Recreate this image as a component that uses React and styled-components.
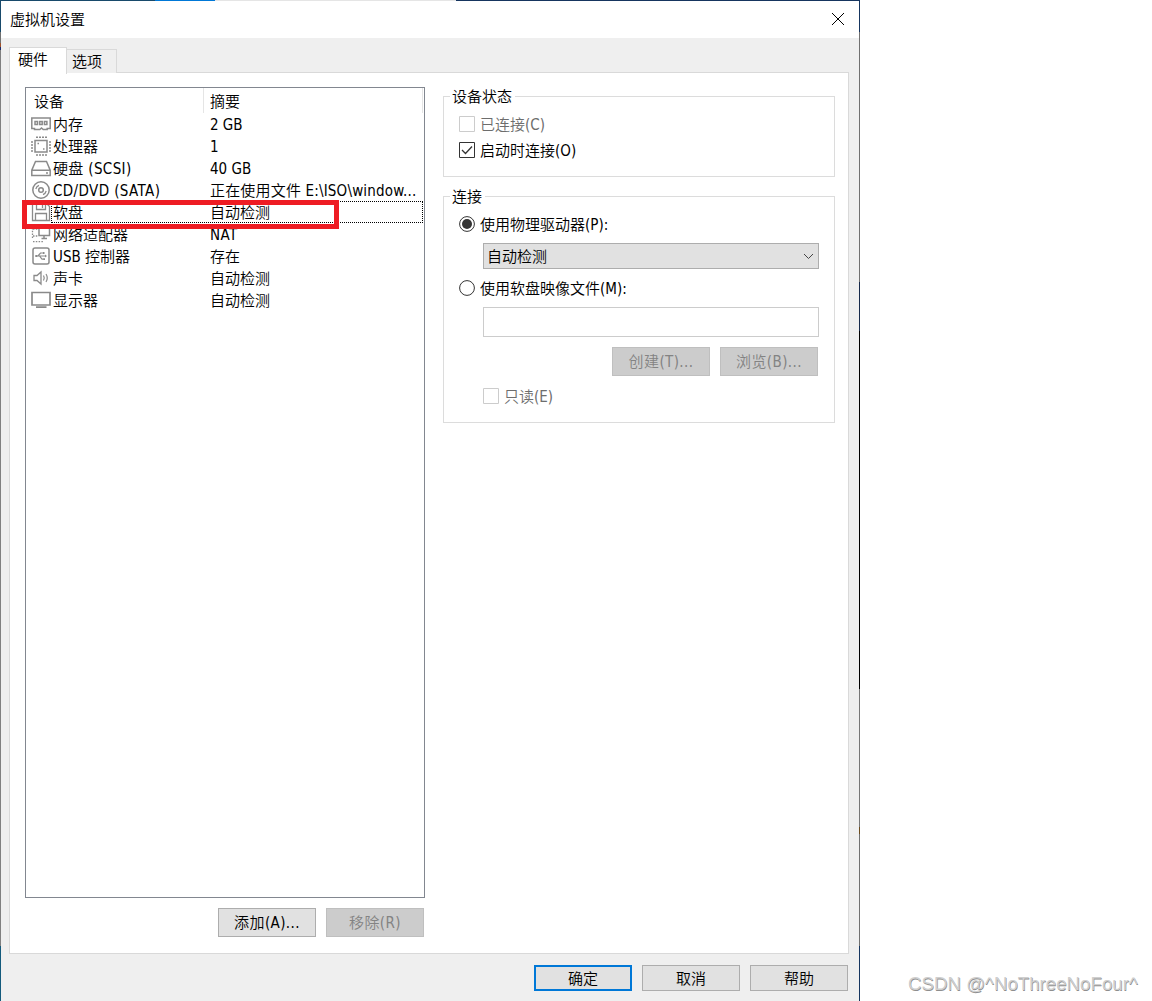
import React from 'react'
import styled, { createGlobalStyle } from 'styled-components';

const GlobalStyle = createGlobalStyle`
  * {
    box-sizing: border-box;
  }
  body {
    margin: 0;
    background: #fff;
    color: #000;
    font-family: "DejaVu Sans Condensed", "DejaVu Sans", "Noto Sans CJK SC DemiLight", "Noto Sans CJK SC Light", "Noto Sans CJK SC", sans-serif;
    font-stretch: condensed;
    font-size: 15px;
    line-height: 22px;
  }
`
const Desktop = styled.div`
  display: flex;
  justify-content: space-between;
  width: 1152px;
  height: 1001px;
  overflow: hidden;
`
const Dialog = styled.div`
  display: grid;
  grid-template-columns: 1px 858px 1px;
  grid-template-rows: 1px 1fr;
  width: 860px;
`
const TopEdge = styled.div`
  grid-column: 1 / 4;
  background: linear-gradient(90deg, #184a6b 0 155px, #0078d7 155px 215px, #e5e5e5 215px 456px, #16355f 456px);
`
const LeftEdge = styled.div`
  background: linear-gradient(180deg, #184a6b 0 31px, #707070 31px 42px, #a0522d 42px 46px, #1b2b6b 46px 49px, #808080 49px 945px, #135a7c 945px);
`
const RightEdge = styled.div`
  background: linear-gradient(180deg, #16355f 0 31px, #707070 31px 281px, #16294a 281px 330px, #000 330px 688px, #777 688px 826px, #6b4a1c 826px 833px, #707070 833px 945px, #16355f 945px);
`
const Frame = styled.div`
  display: flex;
  flex-direction: column;
  background: #efefef;
`
const TitleBar = styled.div`
  display: flex;
  justify-content: space-between;
  align-items: center;
  height: 37px;
  padding: 0 14px 1px 9px;
  background: #fff;
`
const Tabs = styled.div`
  display: flex;
  align-items: flex-end;
  height: 35px;
  padding: 9px 0 0 8px;
`
const Tab = styled.div`
  height: ${({ $active }) => ($active ? 27 : 24)}px;
  width: ${({ $active }) => ($active ? 58 : 50)}px;
  padding-left: ${({ $active }) => ($active ? 8 : 5)}px;
  line-height: ${({ $active }) => ($active ? 25 : 24)}px;
  border: 1px solid #d9d9d9;
  border-bottom: none;
  border-left-width: ${({ $active }) => ($active ? 1 : 0)}px;
  background: ${({ $active }) => ($active ? '#fff' : '#efefef')};
  margin-bottom: ${({ $active }) => ($active ? -1 : 0)}px;
  z-index: ${({ $active }) => ($active ? 1 : 0)};
`
const Page = styled.div`
  display: flex;
  gap: 18px;
  width: 840px;
  height: 882px;
  margin-left: 8px;
  margin-top: -1px;
  padding: 14px 0 0 15px;
  border: 1px solid #d9d9d9;
  background: #fff;
`
const Left = styled.div`
  width: 400px;
`
// glyphs sit a bit high in the line box, the padding brings them level with the icons
const Label = styled.span`
  padding-top: 2px;
  letter-spacing: ${({ $track }) => $track || 0}px;
`
const DeviceList = styled.div`
  height: 811px;
  border: 1px solid #828790;
  padding-right: 1px;
`
const Row = styled.div`
  position: relative;
  display: flex;
  align-items: center;
  height: ${({ $header }) => ($header ? 25 : 22)}px;
  white-space: nowrap;
`
const Name = styled.div`
  display: flex;
  align-items: center;
  width: 178px;
  height: 100%;
  padding-left: ${({ $header }) => ($header ? 8 : 5)}px;
  border-right: 1px solid ${({ $header }) => ($header ? '#e5e5e5' : 'transparent')};

  svg {
    flex: none;
    margin-right: 2px;
  }
`
const Summary = styled.div`
  display: flex;
  align-items: center;
  flex: 1;
  height: 100%;
  padding-left: 6px;
  border-right: 1px solid ${({ $header }) => ($header ? '#e5e5e5' : 'transparent')};
`
const FocusRect = styled.div`
  position: absolute;
  top: 0;
  left: 25px;
  right: 0;
  height: 22px;
  border: 1px dotted #000;
`
const RedMark = styled.div`
  position: absolute;
  z-index: 1;
  top: -1px;
  left: -4px;
  width: 317px;
  height: 29px;
  border: 5px solid #ee1c23;
`
const Buttons = styled.div`
  display: flex;
  justify-content: flex-end;
  gap: 10px;
  padding-top: ${({ $top }) => $top || 0}px;
  padding-right: ${({ $right }) => $right || 0}px;
`
const Button = styled.button`
  width: 98px;
  height: ${({ $short }) => ($short ? 26 : 29)}px;
  padding: ${({ $short }) => ($short ? 2 : 0)}px 0 0;
  font: inherit;
  line-height: 20px;
  letter-spacing: ${({ $short }) => ($short ? 0 : 0.4)}px;
  color: #000;
  background: #e1e1e1;
  border: ${({ $primary }) => ($primary ? '2px solid #0078d7' : '1px solid #adadad')};

  &:disabled {
    color: #838383;
    background: #ccc;
    border-color: #bfbfbf;
  }
`
const Right = styled.div`
  display: flex;
  flex-direction: column;
  width: 392px;
`
const Group = styled.fieldset`
  width: 392px;
  height: ${({ $height }) => $height}px;
  margin: 0 0 10px;
  padding: 6px 15px 0;
  border: 1px solid #dcdcdc;
  min-width: 0;
`
const Legend = styled.legend`
  height: 18px;
  line-height: 21px;
  margin-left: -9px;
  padding: 0 3px 0 2px;
`
const Option = styled.div`
  display: flex;
  align-items: center;
  gap: 5px;
  height: ${({ $height }) => $height || 26}px;
  padding-left: ${({ $indent }) => $indent || 0}px;
  color: ${({ $disabled }) => ($disabled ? '#6d6d6d' : '#000')};

  svg {
    flex: none;
  }
`
const Combo = styled.div`
  display: flex;
  align-items: center;
  justify-content: space-between;
  height: 26px;
  margin: 6px 0 6px 24px;
  padding: 0 4px 0 3px;
  background: #e1e1e1;
  border: 1px solid #adadad;
`
const PathInput = styled.div`
  height: 30px;
  margin: 6px 0 0 24px;
  border: 1px solid #ccc;
`
const Watermark = styled.div`
  align-self: flex-end;
  width: 244px;
  height: 30px;
  font: 18.7px/26px "Liberation Sans", sans-serif;
  white-space: nowrap;
  color: #cfcfcf;
  text-shadow: .5px .5px 0 #8e8e8e;
`

const Icon = ({ children }) => (
  <svg width="20" height="20" viewBox="0 0 20 20" fill="none" stroke="#8a8a8a" strokeWidth="1.5">
    {children}
  </svg>
)

const icons = {
  memory: (
    <Icon>
      <path d="M.8 4h18.400v10.500h-3v1h-4l-1.700-1.500-1.700 1.500H3.500v-1H.8z" />
      <path d="M4 7.500h2.500v3H4zM8.700 7.500h2.500v3h-2.500zM13.400 7.500h2.500v3h-2.500z" strokeWidth="1.500" />
    </Icon>
  ),
  cpu: (
    <Icon>
      <path d="M4 4.500h12v11.500H4z" />
      <path d="M5 1.200h11M5 19h11M1 5v11M19 5v11" strokeWidth="1.500" strokeDasharray="2 1" />
      <path d="M6.500 7.500h1.500M12 13h1.500" />
    </Icon>
  ),
  disk: (
    <Icon>
      <path d="M4.500 3.500h11L19.200 12.200V17.500H.8v-5.300zM.8 12.200h18.400M15 15h2" />
    </Icon>
  ),
  cd: (
    <Icon>
      <circle cx="10" cy="10" r="8.200" />
      <circle cx="10" cy="10" r="2.300" />
      <path d="M4.800 9a5.200 5.200 0 0 1 3.200-3.600M15.200 11a5.200 5.200 0 0 1-3.200 3.600" strokeWidth="1.200" />
    </Icon>
  ),
  floppy: (
    <Icon>
      <path d="M1.500 1.500h14l3 3V18.500H1.500zM5.500 2v5.500h9V2M4.500 18.500V11.500h11V18.500M11.500 3v3" strokeWidth="1.300" />
    </Icon>
  ),
  network: (
    <Icon>
      <path d="M8 4h10.500v7.500H8zM13 12v2.500M10.500 14.500h5.500" />
      <path d="M1.500 4v10M2 5h5M2 12h5M2 17.700h10" strokeWidth="1.300" strokeDasharray="1.500 1.300" />
    </Icon>
  ),
  usb: (
    <Icon>
      <rect x="2" y="2" width="16" height="16" rx="2" />
      <path d="M5 10h10M7 10l2.500-3H12M8.500 10l2.500 3.200h2" strokeWidth="1.200" />
      <path d="M4.300 9h2v2h-2zM12 6h1.500v2H12zM12.500 12.200H14v1.800h-1.500zM14 8.500l2 1.500-2 1.500z" fill="#8a8a8a" stroke="none" />
    </Icon>
  ),
  sound: (
    <Icon>
      <path d="M3 7.500h3L10 4v12l-4-3.500H3z" strokeWidth="1.300" />
      <path d="M12.500 7.500q1.500 2.500 0 5M15 6q2.500 4 0 8" strokeWidth="1.200" />
    </Icon>
  ),
  display: (
    <Icon>
      <path d="M1 2.500h18v12.500H1zM5 17.200h10.500" strokeWidth="1.700" />
    </Icon>
  ),
}

const devices = [
  { icon: 'memory', name: '内存', summary: '2 GB' },
  { icon: 'cpu', name: '处理器', summary: '1' },
  { icon: 'disk', name: '硬盘 (SCSI)', summary: '40 GB', track: 0.35 },
  { icon: 'cd', name: 'CD/DVD (SATA)', summary: '正在使用文件 E:\\ISO\\window...', track: 0.4, summaryTrack: 0.18 },
  { icon: 'floppy', name: '软盘', summary: '自动检测', selected: true },
  { icon: 'network', name: '网络适配器', summary: 'NAT', summaryTrack: 0.4 },
  { icon: 'usb', name: 'USB 控制器', summary: '存在' },
  { icon: 'sound', name: '声卡', summary: '自动检测' },
  { icon: 'display', name: '显示器', summary: '自动检测' },
]

const CheckBox = ({ checked, disabled }) => (
  <svg width="16" height="16" fill="none" stroke={disabled ? '#ccc' : '#333'}>
    <path d="M.5.5h15v15H.5z" />
    {checked && <path d="M3 8l3.500 3.500L13 4.500" strokeWidth="1.300" />}
  </svg>
)

const Radio = ({ checked }) => (
  <svg width="16" height="16" fill="none" stroke="#333">
    <circle cx="8" cy="8" r="7.400" />
    {checked && <circle cx="8" cy="8" r="5" fill="#333" stroke="none" />}
  </svg>
)

const DevicePanel = () => (
  <Left>
    <DeviceList>
      <Row $header>
        <Name $header><Label>设备</Label></Name>
        <Summary $header><Label>摘要</Label></Summary>
      </Row>
      {devices.map(({ icon, name, summary, selected, track, summaryTrack }) => (
        <Row key={name}>
          <Name>{icons[icon]}<Label $track={track}>{name}</Label></Name>
          <Summary><Label $track={summaryTrack}>{summary}</Label></Summary>
          {selected && <FocusRect />}
          {selected && <RedMark />}
        </Row>
      ))}
    </DeviceList>
    <Buttons $top={10} $right={1}>
      <Button>添加(A)...</Button>
      <Button disabled>移除(R)</Button>
    </Buttons>
  </Left>
)

const FloppySettings = () => (
  <Right>
    <Group $height={90}>
      <Legend>设备状态</Legend>
      <Option $disabled><CheckBox disabled /><Label>已连接(C)</Label></Option>
      <Option><CheckBox checked /><Label>启动时连接(O)</Label></Option>
    </Group>
    <Group $height={236}>
      <Legend>连接</Legend>
      <Option><Radio checked /><Label>使用物理驱动器(P):</Label></Option>
      <Combo>
        <Label>自动检测</Label>
        <svg width="11" height="7" fill="none" stroke="#444"><path d="M1 1l4.500 4.500L10 1" /></svg>
      </Combo>
      <Option><Radio /><Label>使用软盘映像文件(M):</Label></Option>
      <PathInput />
      <Buttons $top={10} $right={1}>
        <Button disabled>创建(T)...</Button>
        <Button disabled>浏览(B)...</Button>
      </Buttons>
      <Option $disabled $indent={24} $height={40}><CheckBox disabled /><Label>只读(E)</Label></Option>
    </Group>
  </Right>
)

const App = () => (
  <Desktop>
    <GlobalStyle />
    <Dialog>
      <TopEdge />
      <LeftEdge />
      <Frame>
        <TitleBar>
          <Label>虚拟机设置</Label>
          <svg width="14" height="14" fill="none" stroke="#000"><path d="M1 1l12 12M13 1L1 13" /></svg>
        </TitleBar>
        <Tabs>
          <Tab $active>硬件</Tab>
          <Tab>选项</Tab>
        </Tabs>
        <Page>
          <DevicePanel />
          <FloppySettings />
        </Page>
        <Buttons $top={11} $right={11}>
          <Button $short $primary>确定</Button>
          <Button $short>取消</Button>
          <Button $short>帮助</Button>
        </Buttons>
      </Frame>
      <RightEdge />
    </Dialog>
    <Watermark>CSDN @^NoThreeNoFour^</Watermark>
  </Desktop>
)

export default App;
